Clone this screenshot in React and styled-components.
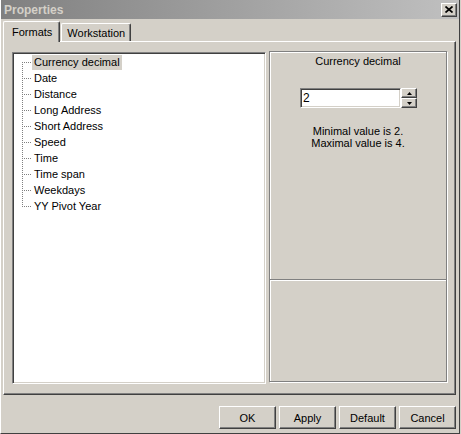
import React from 'react';
import styled, { createGlobalStyle } from 'styled-components';

const GlobalStyle = createGlobalStyle`
  html, body {
    margin: 0;
    padding: 0;
    background: #d4d0c8;
  }
  body {
    font-family: "Liberation Sans", Arial, sans-serif;
    font-size: 11px;
    color: #000;
  }
`;

const Window = styled.div`
  width: 460px;
  height: 434px;
  box-sizing: border-box;
  display: flex;
  flex-direction: column;
  background: #d4d0c8;
  border-left: 1px solid #fff;
  border-right: 1px solid #404040;
  border-bottom: 1px solid #404040;
`;

const TitleBar = styled.div`
  height: 19px;
  flex: none;
  display: flex;
  align-items: center;
  justify-content: space-between;
  padding: 0 2px 0 3px;
  background: linear-gradient(to right, #808080, #c0c0c0);
`;

const TitleText = styled.span`
  font-size: 12px;
  font-weight: bold;
  color: #d4d0c8;
`;

const CloseButton = styled.div`
  width: 16px;
  height: 14px;
  box-sizing: border-box;
  display: flex;
  align-items: center;
  justify-content: center;
  background: #d4d0c8;
  border: 1px solid;
  border-color: #fff #404040 #404040 #fff;
  box-shadow: inset -1px -1px 0 #808080;
`;

const Content = styled.div`
  flex: 1;
  display: flex;
  flex-direction: column;
  padding: 2px 3px 0 2px;
`;

const TabRow = styled.div`
  height: 20px;
  display: flex;
  align-items: flex-end;
  position: relative;
  z-index: 1;
`;

const Tab = styled.div`
  box-sizing: border-box;
  height: ${(p) => (p.$active ? '21px' : '18px')};
  margin-bottom: ${(p) => (p.$active ? '-1px' : '0')};
  margin-right: 1px;
  padding: ${(p) => (p.$active ? '0 7px 1px 8px' : '0 5px 0 5px')};
  display: flex;
  align-items: center;
  background: #d4d0c8;
  border-top: 1px solid #fff;
  border-left: 1px solid #fff;
  border-right: 1px solid #404040;
  border-radius: 2px 2px 0 0;
  box-shadow: inset -1px 0 0 #808080;
`;

const Panel = styled.div`
  height: 354px;
  box-sizing: border-box;
  display: flex;
  align-items: flex-start;
  gap: 3px;
  padding: 9px 6px 0 8px;
  border: 1px solid;
  border-color: #fff #404040 #404040 #fff;
  box-shadow: inset -1px -1px 0 #808080;
`;

const Tree = styled.div`
  width: 254px;
  height: 332px;
  margin-top: 1px;
  box-sizing: border-box;
  background: #fff;
  border: 1px solid;
  border-color: #808080 #fff #fff #808080;
  box-shadow: inset 1px 1px 0 #404040, inset -1px -1px 0 #d4d0c8;
  padding: 1px 0 0 1px;
`;

const TreeRow = styled.div`
  height: 16px;
  display: flex;
  align-items: center;
  padding-left: 8px;
`;

const TreeLabel = styled.span`
  height: 15px;
  line-height: 15px;
  padding: 0 2px;
  white-space: nowrap;
  background: ${(p) => (p.$selected ? '#d4d0c8' : 'transparent')};
`;

const GroupColumn = styled.div`
  width: 178px;
  height: 331px;
  box-sizing: border-box;
  display: flex;
  flex-direction: column;
  border: 1px solid #808080;
  box-shadow: inset 1px 1px 0 #fff, 1px 1px 0 #fff;
`;

const GroupTop = styled.div`
  height: 227px;
  display: flex;
  flex-direction: column;
  align-items: center;
  padding-top: 3px;
  box-sizing: border-box;
`;

const Divider = styled.div`
  border-top: 1px solid #808080;
  border-bottom: 1px solid #fff;
`;

const GroupBottom = styled.div`
  flex: 1;
`;

const Caption = styled.div`
  line-height: 13px;
`;

const Spin = styled.div`
  display: flex;
  margin-top: 20px;
  margin-left: 1px;
`;

const SpinInput = styled.div`
  width: 101px;
  height: 20px;
  box-sizing: border-box;
  background: #fff;
  border: 1px solid;
  border-color: #808080 #fff #fff #808080;
  box-shadow: inset 1px 1px 0 #404040, inset -1px -1px 0 #d4d0c8;
  padding-left: 2px;
  line-height: 18px;
  font-size: 12px;
`;

const SpinButtons = styled.div`
  display: flex;
  flex-direction: column;
`;

const SpinButton = styled.div`
  width: 16px;
  height: 10px;
  box-sizing: border-box;
  display: flex;
  align-items: center;
  justify-content: center;
  background: #d4d0c8;
  border: 1px solid;
  border-color: #fff #404040 #404040 #fff;
  box-shadow: inset -1px -1px 0 #808080;
`;

const Info = styled.div`
  margin-top: 17px;
  line-height: 12px;
  text-align: center;
`;

const Footer = styled.div`
  display: flex;
  justify-content: flex-end;
  gap: 3px;
  padding-top: 11px;
`;

const Button = styled.div`
  width: 57px;
  height: 23px;
  box-sizing: border-box;
  display: flex;
  align-items: center;
  justify-content: center;
  background: #d4d0c8;
  border: 1px solid;
  border-color: #fff #404040 #404040 #fff;
  box-shadow: inset -1px -1px 0 #808080;
  font-size: 11px;
`;

const items = [
  'Currency decimal',
  'Date',
  'Distance',
  'Long Address',
  'Short Address',
  'Speed',
  'Time',
  'Time span',
  'Weekdays',
  'YY Pivot Year',
];

const TreeLines = ({ first, last }) => (
  <svg width="10" height="16" style={{ flex: 'none' }}>
    <line x1="0.5" y1={first ? 8 : 0} x2="0.5" y2={last ? 9 : 16} stroke="#808080" strokeDasharray="1 1" />
    <line x1="2" y1="8.5" x2="10" y2="8.5" stroke="#808080" strokeDasharray="1 1" />
  </svg>
);

const Arrow = ({ up }) => (
  <svg width="5" height="3" viewBox="0 0 5 3">
    <polygon points={up ? '2.5,0 5,3 0,3' : '0,0 5,0 2.5,3'} fill="#000" />
  </svg>
);

const App = () => {
  return (
    <>
      <GlobalStyle />
      <Window>
        <TitleBar>
          <TitleText>Properties</TitleText>
          <CloseButton>
            <svg width="8" height="7" viewBox="0 0 8 7">
              <path d="M0.5 0.5 L7.5 6.5 M7.5 0.5 L0.5 6.5" stroke="#000" strokeWidth="1.7" />
            </svg>
          </CloseButton>
        </TitleBar>

        <Content>
          <TabRow>
            <Tab $active>Formats</Tab>
            <Tab>Workstation</Tab>
          </TabRow>

          <Panel>
            <Tree>
              {items.map((name, i) => (
                <TreeRow key={name}>
                  <TreeLines first={i === 0} last={i === items.length - 1} />
                  <TreeLabel $selected={i === 0}>{name}</TreeLabel>
                </TreeRow>
              ))}
            </Tree>

            <GroupColumn>
              <GroupTop>
                <Caption>Currency decimal</Caption>
                <Spin>
                  <SpinInput>2</SpinInput>
                  <SpinButtons>
                    <SpinButton><Arrow up /></SpinButton>
                    <SpinButton><Arrow /></SpinButton>
                  </SpinButtons>
                </Spin>
                <Info>
                  Minimal value is 2.
                  <br />
                  Maximal value is 4.
                </Info>
              </GroupTop>
              <Divider />
              <GroupBottom />
            </GroupColumn>
          </Panel>

          <Footer>
            <Button>OK</Button>
            <Button>Apply</Button>
            <Button>Default</Button>
            <Button>Cancel</Button>
          </Footer>
        </Content>
      </Window>
    </>
  );
};

export default App;
